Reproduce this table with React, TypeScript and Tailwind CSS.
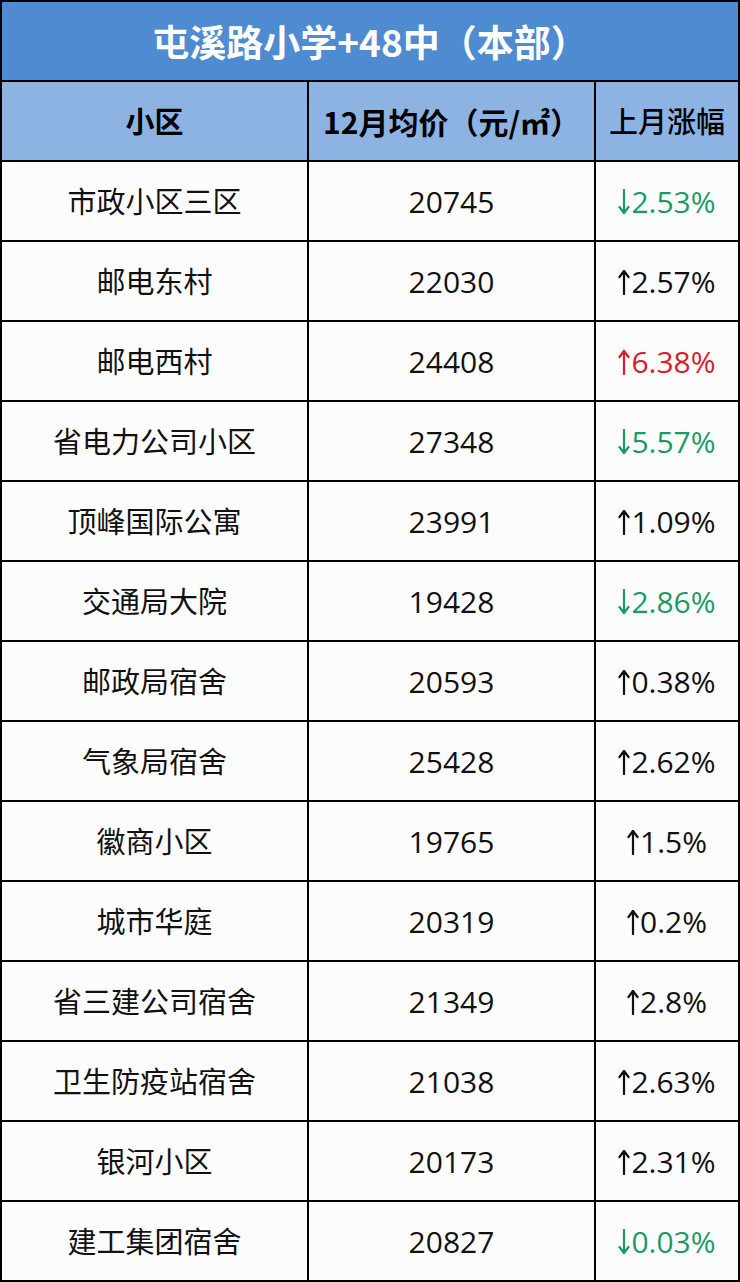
import React from "react";

type Row = { name: string; price: string; dir: "up" | "down"; pct: string; color: "black" | "green" | "red" };

const rows: Row[] = [
  { name: "市政小区三区", price: "20745", dir: "down", pct: "2.53%", color: "green" },
  { name: "邮电东村", price: "22030", dir: "up", pct: "2.57%", color: "black" },
  { name: "邮电西村", price: "24408", dir: "up", pct: "6.38%", color: "red" },
  { name: "省电力公司小区", price: "27348", dir: "down", pct: "5.57%", color: "green" },
  { name: "顶峰国际公寓", price: "23991", dir: "up", pct: "1.09%", color: "black" },
  { name: "交通局大院", price: "19428", dir: "down", pct: "2.86%", color: "green" },
  { name: "邮政局宿舍", price: "20593", dir: "up", pct: "0.38%", color: "black" },
  { name: "气象局宿舍", price: "25428", dir: "up", pct: "2.62%", color: "black" },
  { name: "徽商小区", price: "19765", dir: "up", pct: "1.5%", color: "black" },
  { name: "城市华庭", price: "20319", dir: "up", pct: "0.2%", color: "black" },
  { name: "省三建公司宿舍", price: "21349", dir: "up", pct: "2.8%", color: "black" },
  { name: "卫生防疫站宿舍", price: "21038", dir: "up", pct: "2.63%", color: "black" },
  { name: "银河小区", price: "20173", dir: "up", pct: "2.31%", color: "black" },
  { name: "建工集团宿舍", price: "20827", dir: "down", pct: "0.03%", color: "green" },
];

function Arrow({ dir }: { dir: "up" | "down" }) {
  return (
    <svg width="12" height="26" viewBox="0 0 12 26" className="mr-[1px] mt-[1px]" aria-hidden="true">
      {dir === "up" ? (
        <g stroke="currentColor" strokeWidth="2.2" fill="none" strokeLinecap="round" strokeLinejoin="round">
          <line x1="6" y1="2" x2="6" y2="25" />
          <polyline points="1.5,8 6,2 10.5,8" />
        </g>
      ) : (
        <g stroke="currentColor" strokeWidth="2.2" fill="none" strokeLinecap="round" strokeLinejoin="round">
          <line x1="6" y1="1" x2="6" y2="24" />
          <polyline points="1.5,18 6,24 10.5,18" />
        </g>
      )}
    </svg>
  );
}

export default function App() {
  return (
    <div className="w-[740px] h-[1282px] bg-black p-[2px] grid grid-cols-[305px_285px_142px] auto-rows-[78px] gap-[2px] font-['Noto_Sans_CJK_SC',sans-serif]">
      <div className="col-span-3 bg-[#4f8bd1] flex items-center justify-center text-white font-bold text-[37px] leading-none">
        屯溪路小学+48中（本部）
      </div>
      <div className="bg-[#8db3e2] flex items-center justify-center text-black font-bold text-[29px]">小区</div>
      <div className="bg-[#8db3e2] flex items-center justify-center text-black font-bold text-[30px]">
        12月均价（元/㎡）
      </div>
      <div className="bg-[#8db3e2] flex items-center justify-center text-black font-medium text-[29px]">上月涨幅</div>
      {rows.map((r) => (
        <React.Fragment key={r.name}>
          <div className="bg-[#fcfcfd] flex items-center justify-center text-[#111] text-[29px]">{r.name}</div>
          <div className="bg-[#fcfcfd] flex items-center justify-center text-[#111] text-[30px] font-['Open_Sans','Noto_Sans_CJK_SC',sans-serif]">
            {r.price}
          </div>
          <div
            className={
              "bg-[#fcfcfd] flex items-center justify-center text-[30px] font-['Open_Sans','Noto_Sans_CJK_SC',sans-serif] " +
              (r.color === "green" ? "text-[#1c9a66]" : r.color === "red" ? "text-[#d4202a]" : "text-[#111]")
            }
          >
            <Arrow dir={r.dir} />
            <span>{r.pct}</span>
          </div>
        </React.Fragment>
      ))}
    </div>
  );
}
